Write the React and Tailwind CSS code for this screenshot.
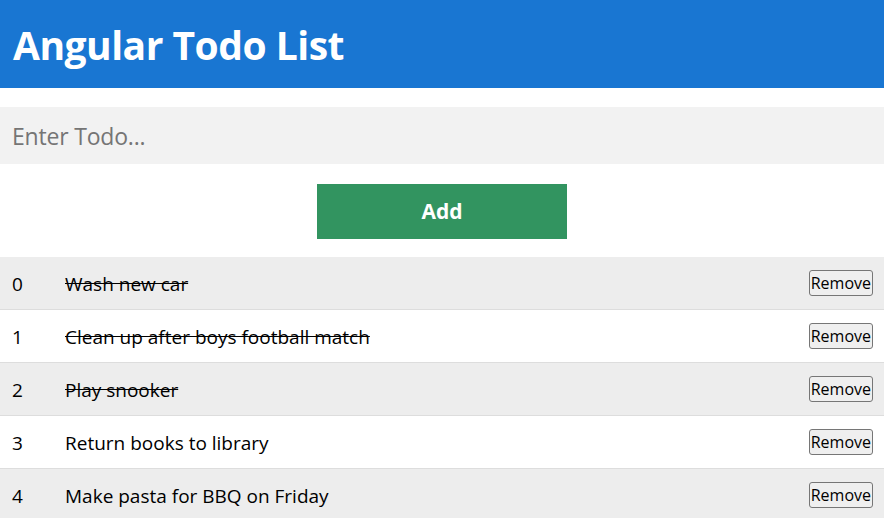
import React from "react";

const todos = [
  { text: "Wash new car", done: true },
  { text: "Clean up after boys football match", done: true },
  { text: "Play snooker", done: true },
  { text: "Return books to library", done: false },
  { text: "Make pasta for BBQ on Friday", done: false },
];

export default function App() {
  return (
    <div className="w-[884px] h-[518px] overflow-hidden bg-white text-black" style={{ fontFamily: '"Open Sans", "Noto Sans", sans-serif' }}>
      <header className="h-[88px] bg-[#1976d2] flex items-center px-[13px]">
        <h1 className="text-[39px] font-bold text-white leading-none tracking-[-0.5px]">Angular Todo List</h1>
      </header>
      <div className="mt-[19px]">
        <input
          className="w-full h-[57px] bg-[#f2f2f2] px-[12px] text-[23px] text-black placeholder:text-[#757575] outline-none tracking-[-0.2px]"
          placeholder="Enter Todo..."
        />
      </div>
      <div className="flex justify-center mt-[20px]">
        <button className="w-[250px] h-[55px] bg-[#329460] text-white font-bold text-[21px]">Add</button>
      </div>
      <ul className="mt-[18px]">
        {todos.map((t, i) => (
          <li
            key={i}
            className={`h-[53px] flex items-center border-b border-[#dddddd] pl-[12px] pr-[11px] text-[19px] ${i % 2 === 0 ? "bg-[#ededed]" : "bg-white"}`}
          >
            <span className="w-[53px] pt-[3px]">{i}</span>
            <span className={`flex-1 pt-[3px] ${t.done ? "line-through" : ""}`}>{t.text}</span>
            <button className="h-[26px] px-[1px] border border-[#767676] rounded-[3px] bg-[#efefef] text-[16px] leading-none text-black">Remove</button>
          </li>
        ))}
      </ul>
    </div>
  );
}
